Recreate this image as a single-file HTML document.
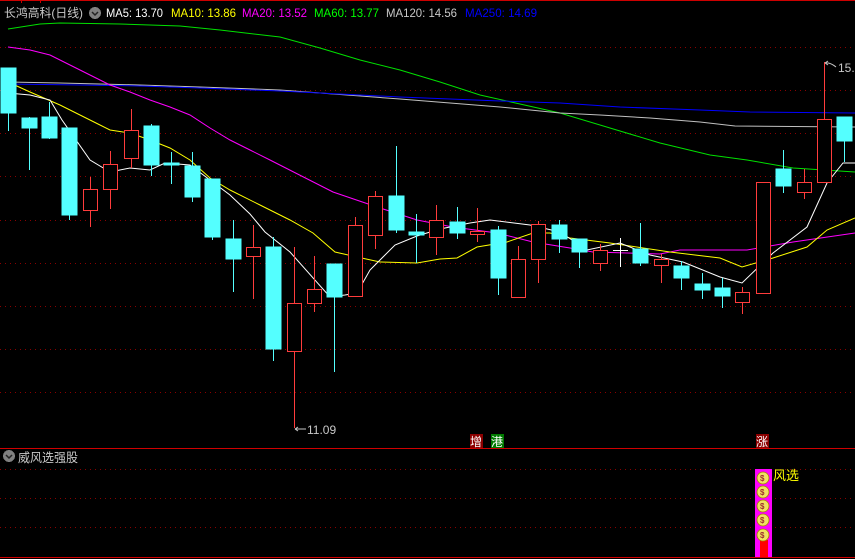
<!DOCTYPE html>
<html><head><meta charset="utf-8"><style>
html,body{margin:0;padding:0;background:#000;overflow:hidden}
svg{display:block}
text{font-family:"Liberation Sans","Noto Sans CJK SC",sans-serif}
</style></head><body>
<svg width="855" height="559" viewBox="0 0 855 559" xmlns="http://www.w3.org/2000/svg" shape-rendering="crispEdges">
<rect width="855" height="559" fill="#000"/>
<line x1="0" y1="0.5" x2="855" y2="0.5" stroke="#c00"/>
<line x1="21.5" y1="0" x2="21.5" y2="3" stroke="#c00"/>
<line x1="40.5" y1="0" x2="40.5" y2="3" stroke="#c00"/>
<g stroke="#8a0000" stroke-dasharray="1,4">
<line x1="0" y1="47.5" x2="855" y2="47.5"/><line x1="0" y1="90.5" x2="855" y2="90.5"/>
<line x1="0" y1="133.5" x2="855" y2="133.5"/><line x1="0" y1="176.5" x2="855" y2="176.5"/>
<line x1="0" y1="220.5" x2="855" y2="220.5"/><line x1="0" y1="263.5" x2="855" y2="263.5"/>
<line x1="0" y1="306.5" x2="855" y2="306.5"/><line x1="0" y1="349.5" x2="855" y2="349.5"/>
<line x1="0" y1="392.5" x2="855" y2="392.5"/>
<line x1="0" y1="469.5" x2="855" y2="469.5"/><line x1="0" y1="498.5" x2="855" y2="498.5"/>
<line x1="0" y1="527.5" x2="855" y2="527.5"/>
</g>
<line x1="0" y1="448.5" x2="855" y2="448.5" stroke="#d00000"/>
<line x1="0" y1="557.5" x2="855" y2="557.5" stroke="#d00000"/>
<g fill="none" stroke-width="1" shape-rendering="auto">
<polyline stroke="#00e000" points="8,29 40,24 60,23 120,24 180,26 220,30 280,37 320,48 360,60 400,70 440,82 480,95 520,104 560,113 610,128 660,143 710,155 747,160 793,168 855,172"/>
<polyline stroke="#c0c0c0" points="8,82 60,83 100,84 140,85 200,87 280,90 400,99 500,107 560,113 600,115 650,118 700,122 735,126 855,127"/>
<polyline stroke="#0000ff" points="8,84 80,85 140,86 200,88 280,91 400,97 500,101 560,103 620,107 700,110 750,112 855,113"/>
<polyline stroke="#ff00ff" points="8,47 30,50 50,55 70,65 90,75 110,85 130,92 150,100 170,107 190,115 210,128 230,140 250,150 270,160 333,192 380,208 417,220 453,227 497,233 533,242 570,248 593,252 660,254 680,250 747,250 793,242 855,233"/>
<polyline stroke="#ffff00" points="8,82 30,92 60,105 80,115 100,125 110,130 130,133 150,140 170,148 190,160 210,178 230,190 260,205 290,220 313,233 335,252 357,257 380,262 417,263 440,259 457,258 477,247 507,242 533,233 550,233 570,238 610,243 670,252 720,258 742,267 773,258 807,247 827,230 855,218"/>
<polyline stroke="#ffffff" points="8,93 30,95 50,100 62,120 90,160 110,172 130,168 150,170 165,163 190,165 210,180 230,195 250,214 265,232 290,252 330,297 345,295 357,293 370,270 395,245 417,236 440,229 470,223 490,220 530,225 560,232 587,250 620,243 650,255 683,262 720,277 742,283 773,253 807,227 827,183 843,163 855,163"/>
</g>
<g stroke-width="1">
<g stroke="#54ffff" fill="#54ffff">
<line x1="8.5" y1="68" x2="8.5" y2="131"/><rect x="1" y="68" width="15" height="45"/>
<line x1="29.5" y1="117" x2="29.5" y2="170"/><rect x="22" y="118" width="15" height="10"/>
<line x1="49.5" y1="102" x2="49.5" y2="139"/><rect x="42" y="117" width="15" height="21"/>
<line x1="69.5" y1="128" x2="69.5" y2="220"/><rect x="62" y="128" width="15" height="87"/>
<line x1="151.5" y1="124" x2="151.5" y2="176"/><rect x="144" y="126" width="15" height="39"/>
<line x1="171.5" y1="152" x2="171.5" y2="184"/><rect x="164" y="163" width="15" height="2"/>
<line x1="192.5" y1="152" x2="192.5" y2="202"/><rect x="185" y="166" width="15" height="31"/>
<line x1="212.5" y1="179" x2="212.5" y2="240"/><rect x="205" y="179" width="15" height="58"/>
<line x1="233.5" y1="220" x2="233.5" y2="292"/><rect x="226" y="239" width="15" height="20"/>
<line x1="273.5" y1="237" x2="273.5" y2="361"/><rect x="266" y="247" width="15" height="102"/>
<line x1="334.5" y1="264" x2="334.5" y2="372"/><rect x="327" y="264" width="15" height="33"/>
<line x1="396.5" y1="146" x2="396.5" y2="233"/><rect x="389" y="196" width="15" height="34"/>
<line x1="416.5" y1="214" x2="416.5" y2="263"/><rect x="409" y="232" width="15" height="3"/>
<line x1="457.5" y1="207" x2="457.5" y2="239"/><rect x="450" y="222" width="15" height="11"/>
<line x1="498.5" y1="226" x2="498.5" y2="295"/><rect x="491" y="230" width="15" height="48"/>
<line x1="559.5" y1="220" x2="559.5" y2="253"/><rect x="552" y="225" width="15" height="14"/>
<line x1="579.5" y1="239" x2="579.5" y2="268"/><rect x="572" y="239" width="15" height="13"/>
<line x1="640.5" y1="223" x2="640.5" y2="266"/><rect x="633" y="249" width="15" height="14"/>
<line x1="681.5" y1="261" x2="681.5" y2="290"/><rect x="674" y="266" width="15" height="12"/>
<line x1="702.5" y1="273" x2="702.5" y2="299"/><rect x="695" y="284" width="15" height="6"/>
<line x1="722.5" y1="278" x2="722.5" y2="308"/><rect x="715" y="288" width="15" height="8"/>
<line x1="783.5" y1="150" x2="783.5" y2="193"/><rect x="776" y="169" width="15" height="17"/>
<line x1="844.5" y1="117" x2="844.5" y2="162"/><rect x="837" y="117" width="15" height="24"/>
</g>
<g stroke="#ffffff"><line x1="620.5" y1="238" x2="620.5" y2="267"/><line x1="613" y1="250.5" x2="628" y2="250.5"/></g>
<g stroke="#ff3c3c" fill="#000">
<line x1="90.5" y1="177" x2="90.5" y2="227"/><rect x="83.5" y="189.5" width="14" height="21"/>
<line x1="110.5" y1="151" x2="110.5" y2="209"/><rect x="103.5" y="164.5" width="14" height="25"/>
<line x1="131.5" y1="109" x2="131.5" y2="168"/><rect x="124.5" y="130.5" width="14" height="28"/>
<line x1="253.5" y1="225" x2="253.5" y2="299"/><rect x="246.5" y="247.5" width="14" height="9"/>
<line x1="294.5" y1="247" x2="294.5" y2="428"/><rect x="287.5" y="303.5" width="14" height="48"/>
<line x1="314.5" y1="256" x2="314.5" y2="312"/><rect x="307.5" y="289.5" width="14" height="14"/>
<line x1="355.5" y1="217" x2="355.5" y2="296"/><rect x="348.5" y="225.5" width="14" height="71"/>
<line x1="375.5" y1="191" x2="375.5" y2="249"/><rect x="368.5" y="196.5" width="14" height="39"/>
<line x1="436.5" y1="205" x2="436.5" y2="255"/><rect x="429.5" y="220.5" width="14" height="17"/>
<line x1="477.5" y1="208" x2="477.5" y2="242"/><rect x="470.5" y="231.5" width="14" height="3"/>
<line x1="518.5" y1="246" x2="518.5" y2="297"/><rect x="511.5" y="259.5" width="14" height="38"/>
<line x1="538.5" y1="221" x2="538.5" y2="283"/><rect x="531.5" y="224.5" width="14" height="35"/>
<line x1="600.5" y1="244" x2="600.5" y2="271"/><rect x="593.5" y="250.5" width="14" height="13"/>
<line x1="661.5" y1="254" x2="661.5" y2="283"/><rect x="654.5" y="259.5" width="14" height="6"/>
<line x1="742.5" y1="287" x2="742.5" y2="314"/><rect x="735.5" y="292.5" width="14" height="10"/>
<rect x="756.5" y="182.5" width="14" height="111"/>
<line x1="804.5" y1="169" x2="804.5" y2="199"/><rect x="797.5" y="182.5" width="14" height="10"/>
<line x1="824.5" y1="62" x2="824.5" y2="119"/><rect x="817.5" y="119.5" width="14" height="63"/>
</g>
</g>
<g fill="#c8c8c8" font-size="12">
<text x="307" y="434">11.09</text>
<text x="838" y="72">15.</text>
</g>
<g stroke="#c8c8c8" fill="none" shape-rendering="auto"><path d="M295,429 H306 M295,429 l3,-2 M295,429 l3,2"/><path d="M825,63 l3,-2 M825,63 l3,2 M825,63 q5,-1 11,4"/></g>
<g font-size="12" lengthAdjust="spacingAndGlyphs">
<text x="4" y="17" fill="#c8c8c8" textLength="79" lengthAdjust="spacingAndGlyphs">长鸿高科(日线)</text>
<text x="106" y="17" fill="#ffffff" textLength="57" lengthAdjust="spacingAndGlyphs">MA5: 13.70</text>
<text x="171" y="17" fill="#ffff00" textLength="65" lengthAdjust="spacingAndGlyphs">MA10: 13.86</text>
<text x="242" y="17" fill="#ff00ff" textLength="65" lengthAdjust="spacingAndGlyphs">MA20: 13.52</text>
<text x="314" y="17" fill="#00ff00" textLength="65" lengthAdjust="spacingAndGlyphs">MA60: 13.77</text>
<text x="386" y="17" fill="#c8c8c8" textLength="71" lengthAdjust="spacingAndGlyphs">MA120: 14.56</text>
<text x="465" y="17" fill="#0000ff" textLength="72" lengthAdjust="spacingAndGlyphs">MA250: 14.69</text>
</g>
<circle cx="95" cy="13" r="6" fill="#808080"/><path d="M92,12 l3,3 l3,-3" stroke="#222" stroke-width="1.5" fill="none" shape-rendering="auto"/>
<circle cx="9" cy="456" r="6" fill="#808080"/><path d="M6,455 l3,3 l3,-3" stroke="#222" stroke-width="1.5" fill="none" shape-rendering="auto"/>
<text x="18" y="462" fill="#c8c8c8" font-size="12.5" textLength="60" lengthAdjust="spacingAndGlyphs">威风选强股</text>
<rect x="470" y="434" width="13" height="14" fill="#8b0000"/><text x="470" y="446" fill="#fff" font-size="12">增</text>
<rect x="491" y="434" width="13" height="14" fill="#007a00"/><text x="491" y="446" fill="#fff" font-size="12">港</text>
<rect x="756" y="434" width="13" height="14" fill="#8b0000"/><text x="756" y="446" fill="#fff" font-size="12">涨</text>
<rect x="755" y="469" width="17" height="88" fill="#ff00ff"/>
<rect x="760" y="540" width="8" height="17" fill="#ff0000"/>
<g shape-rendering="auto">
<g fill="#f0e060" stroke="#a08000" stroke-width="0.8">
<ellipse cx="763" cy="478" rx="6" ry="6"/><ellipse cx="763" cy="492" rx="6" ry="6"/>
<ellipse cx="763" cy="506" rx="6" ry="6"/><ellipse cx="763" cy="520" rx="6" ry="6"/>
<ellipse cx="763" cy="535" rx="6" ry="6"/>
</g>
<g fill="#a03030" font-size="8" font-weight="bold">
<text x="760" y="481">$</text><text x="760" y="495">$</text><text x="760" y="509">$</text><text x="760" y="523">$</text><text x="760" y="538">$</text>
</g>
</g>
<text x="773" y="480" fill="#ffff00" font-size="13" textLength="26" lengthAdjust="spacingAndGlyphs">风选</text>
</svg>
</body></html>
